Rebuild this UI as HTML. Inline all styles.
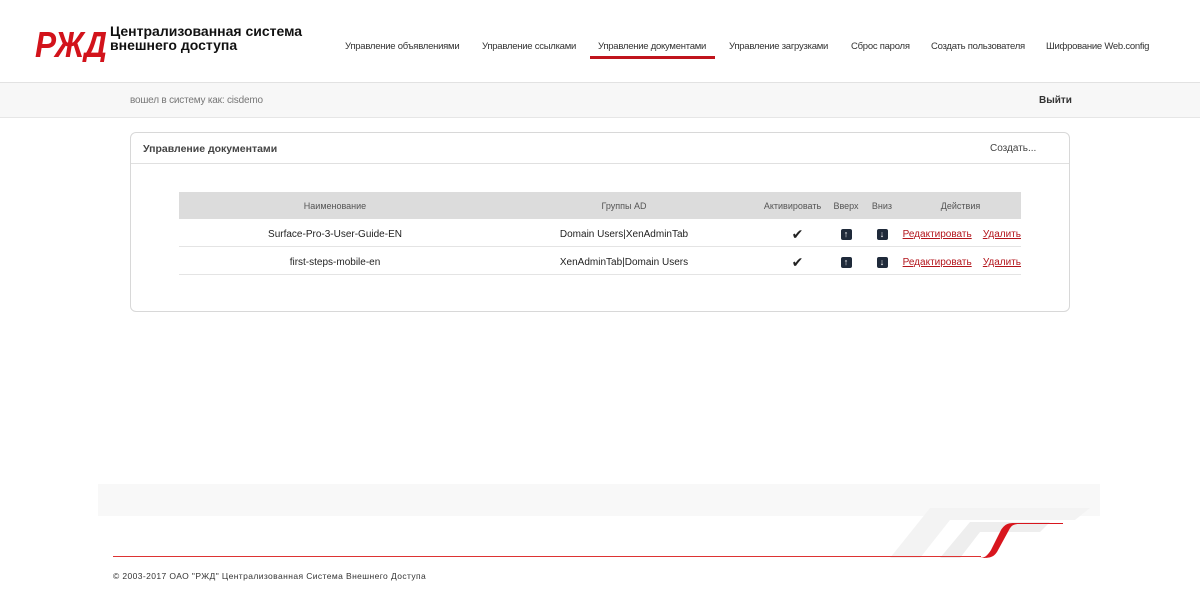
<!DOCTYPE html>
<html><head><meta charset="utf-8"><style>
body{margin:0;width:1200px;height:600px;background:#fff;font-family:"Liberation Sans","DejaVu Sans",sans-serif;position:relative;overflow:hidden}
.a{position:absolute}
.nav{font-size:9.5px;letter-spacing:-0.25px;color:#333;top:41px;white-space:nowrap}
table{border-collapse:collapse;font-size:10px;color:#222;table-layout:fixed}
td,th{height:27px;padding:0;text-align:center;white-space:nowrap}
tr.r td{padding-top:3px;height:24px}
th{background:#dcdcdc;font-weight:normal;color:#555;font-size:9px}
tr.r td{border-bottom:1px solid #e4e4e4}
a{color:#b3141b;text-decoration:underline;font-size:10px}
.ic{display:inline-block;width:11px;height:11px;background:#1f2a3a;border-radius:2px;color:#fff;font-size:9px;line-height:11px;font-weight:bold}
</style></head><body>
<svg class="a" style="left:34px;top:24px" width="76" height="38" viewBox="0 0 76 38">
<text x="1" y="33" font-family="Liberation Sans" font-weight="bold" font-style="italic" font-size="36" fill="#d2131b" textLength="72" lengthAdjust="spacingAndGlyphs">РЖД</text>
</svg>
<div class="a" style="left:110px;top:24px;font-size:14px;font-weight:bold;line-height:14px;color:#111">Централизованная система<br>внешнего доступа</div>
<div class="a nav" style="left:345px">Управление объявлениями</div>
<div class="a nav" style="left:482px">Управление ссылками</div>
<div class="a nav" style="left:598px">Управление документами</div>
<div class="a" style="left:590px;top:56px;width:125px;height:3px;background:#c0141c"></div>
<div class="a nav" style="left:729px">Управление загрузками</div>
<div class="a nav" style="left:851px">Сброс пароля</div>
<div class="a nav" style="left:931px">Создать пользователя</div>
<div class="a nav" style="left:1046px">Шифрование Web.config</div>
<div class="a" style="left:0;top:82px;width:1200px;height:34px;background:#f7f7f7;border-top:1px solid #e2e2e2;border-bottom:1px solid #e6e6e6"></div>
<div class="a" style="left:130px;top:95px;font-size:10px;color:#777;letter-spacing:-0.2px">вошел в систему как: cisdemo</div>
<div class="a" style="left:1039px;top:95px;font-size:10px;color:#333;font-weight:bold">Выйти</div>
<div class="a" style="left:130px;top:132px;width:938px;height:178px;border:1px solid #d8d8d8;border-radius:6px"></div>
<div class="a" style="left:131px;top:163px;width:938px;height:1px;background:#e0e0e0"></div>
<div class="a" style="left:143px;top:143px;font-size:10.5px;color:#444;font-weight:bold">Управление документами</div>
<div class="a" style="left:990px;top:143px;font-size:10px;color:#444">Создать...</div>
<table class="a" style="left:179px;top:192px;width:842px">
<colgroup><col style="width:312px"><col style="width:266px"><col style="width:71px"><col style="width:36px"><col style="width:36px"><col style="width:121px"></colgroup>
<tr><th>Наименование</th><th>Группы AD</th><th>Активировать</th><th>Вверх</th><th>Вниз</th><th>Действия</th></tr>
<tr class="r"><td>Surface-Pro-3-User-Guide-EN</td><td>Domain Users|XenAdminTab</td><td style="padding-left:10px;font-size:14px">✔</td><td><span class="ic">↑</span></td><td><span class="ic">↓</span></td><td style="text-align:right"><a>Редактировать</a>&nbsp;&nbsp;&nbsp;&nbsp;<a>Удалить</a></td></tr>
<tr class="r"><td>first-steps-mobile-en</td><td>XenAdminTab|Domain Users</td><td style="padding-left:10px;font-size:14px">✔</td><td><span class="ic">↑</span></td><td><span class="ic">↓</span></td><td style="text-align:right"><a>Редактировать</a>&nbsp;&nbsp;&nbsp;&nbsp;<a>Удалить</a></td></tr>
</table>
<div class="a" style="left:98px;top:484px;width:1002px;height:32px;background:#f8f8f8"></div>
<svg class="a" style="left:860px;top:500px" width="240" height="62"><path d="M30 58 L70 8 H230 L215 20 H90 L60 58Z" fill="#f3f3f3"/><path d="M80 58 L110 22 H190 L180 32 H120 L100 58Z" fill="#eeeeee"/></svg>
<div class="a" style="left:113px;top:556px;width:868px;height:1px;background:#d33"></div>
<svg class="a" style="left:975px;top:520px" width="90" height="40"><path d="M4 38 C10 38 12 36 16 30 L26 10 C30 4 33 3 40 3 H88 V4 H44 C38 4 36 6 34 10 L22 32 C18 38 14 38 4 38Z" fill="#d8161e"/></svg>
<div class="a" style="left:113px;top:571px;font-size:8.5px;color:#333;letter-spacing:.4px">© 2003-2017 ОАО "РЖД" Централизованная Система Внешнего Доступа</div>
</body></html>
